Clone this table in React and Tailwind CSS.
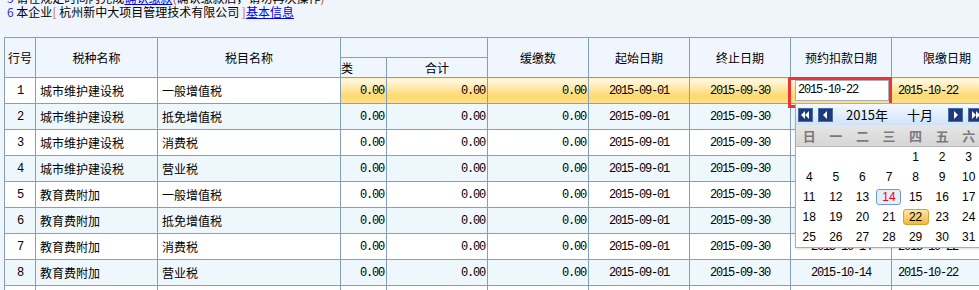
import React from 'react';

const CJK = { fontFamily: '"Noto Sans CJK SC", "Liberation Sans", sans-serif' };

const rows = [
  ['1', '城市维护建设税', '一般增值税', '2015-10-22', '2015-10-22'],
  ['2', '城市维护建设税', '抵免增值税', '2015-10-14', '2015-10-22'],
  ['3', '城市维护建设税', '消费税', '2015-10-14', '2015-10-22'],
  ['4', '城市维护建设税', '营业税', '2015-10-14', '2015-10-22'],
  ['5', '教育费附加', '一般增值税', '2015-10-14', '2015-10-22'],
  ['6', '教育费附加', '抵免增值税', '2015-10-14', '2015-10-22'],
  ['7', '教育费附加', '消费税', '2015-10-14', '2015-10-22'],
  ['8', '教育费附加', '营业税', '2015-10-14', '2015-10-22'],
  ['9', '地方教育附加', '一般增值税', '2015-10-14', '2015-10-22'],
];

const num = 'font-["Liberation_Mono",monospace] text-[12px] tracking-[-1.2px]';

function NavBtn({ dir, double }) {
  return (
    <div className="shrink-0 w-[15px] h-[14px] bg-[#1d3a7a] border border-[#4a6aa8] flex items-center justify-center">
      <svg width="11" height="8" viewBox="0 0 11 8">
        {dir === 'left' ? (
          double ? (
            <>
              <polygon points="1,4 5,0 5,8" fill="#fff" />
              <polygon points="5,4 9,0 9,8" fill="#fff" />
            </>
          ) : (
            <polygon points="3,4 7,0 7,8" fill="#fff" />
          )
        ) : double ? (
          <>
            <polygon points="10,4 6,0 6,8" fill="#fff" />
            <polygon points="6,4 2,0 2,8" fill="#fff" />
          </>
        ) : (
          <polygon points="8,4 4,0 4,8" fill="#fff" />
        )}
      </svg>
    </div>
  );
}

function Calendar() {
  const days = [null, null, null, null, 1, 2, 3];
  for (let d = 4; d <= 31; d++) days.push(d);
  return (
    <div className="absolute left-[795px] top-[103px] w-[188px] bg-white border border-[#9fb0c4] shadow-sm">
      <div className="h-[21px] flex items-center gap-[5px] px-[2px] bg-gradient-to-b from-[#f4f9ff] to-[#cfe3f9] text-[13px] text-black whitespace-nowrap" style={CJK}>
        <NavBtn dir="left" double />
        <NavBtn dir="left" />
        <span className="shrink-0 ml-[0px] w-[58px] text-center">2015年</span>
        <span className="shrink-0 w-[38px] text-center">十月</span>
        <span className="shrink-0 ml-[-1px]" />
        <NavBtn dir="right" />
        <NavBtn dir="right" double />
      </div>
      <div className="h-[22px] grid grid-cols-7 items-center bg-gradient-to-b from-[#e6e6e6] to-[#d6d6d6] border-b border-[#b8b8b8] text-[13px] font-bold text-[#7a7a7a]" style={CJK}>
        {['日', '一', '二', '三', '四', '五', '六'].map((w) => (
          <div key={w} className="text-center">{w}</div>
        ))}
      </div>
      <div className="grid grid-cols-7 font-['Liberation_Sans',sans-serif] text-[12px] text-black">
        {days.map((d, i) => (
          <div key={i} className="h-[20px] flex items-center justify-center">
            {d === 14 ? (
              <span className="w-[25px] h-[16px] rounded-[3px] border border-[#6d9bd8] bg-[#e4effc] text-[#ff0000] flex items-center justify-center">14</span>
            ) : d === 22 ? (
              <span className="w-[26px] h-[16px] rounded-[3px] border border-[#d9a22a] bg-gradient-to-b from-[#fde6a0] to-[#f0b93a] flex items-center justify-center">22</span>
            ) : (
              d
            )}
          </div>
        ))}
      </div>
    </div>
  );
}

export default function App() {
  const b = 'border border-[#859ebd]';
  const hl = 'bg-[linear-gradient(to_bottom,#fffbea,#ffeab0_35%,#ffd970_70%,#ffe391)]';
  return (
    <div className="relative w-[979px] h-[290px] overflow-hidden bg-[#f0f5fc] text-black" style={CJK}>
      <div className="pl-[7px] text-[12px] leading-[14px]">
        <div className="-mt-[9px] h-[14px] whitespace-nowrap">
          <span className="text-[#3333cc]">5</span> 请在规定时间内完成
          <span className="text-[#0000ee] underline">确认缴款</span>
          <span className="text-[#a0522d]">(</span>确认缴款后，请勿再次操作
          <span className="text-[#a0522d]">)</span>
        </div>
        <div className="h-[14px] whitespace-nowrap">
          <span className="text-[#3333cc]">6</span> 本企业<span className="text-[#d2691e]">[</span> 杭州新中大项目管理技术有限公司 <span className="text-[#d2691e]">]</span>
          <span className="text-[#0000ee] underline">基本信息 </span>
        </div>
      </div>

      <table className="mt-[18px] ml-[4px] border-collapse table-fixed text-[12px] bg-white" style={{ width: 988 }}>
        <colgroup>
          {[31, 122, 183, 46, 101, 101, 101, 101, 101, 101].map((w, i) => (
            <col key={i} style={{ width: w }} />
          ))}
        </colgroup>
        <thead className="bg-[#f0f6fd]">
          <tr className="h-[20px]">
            <th rowSpan={2} className={`${b} font-normal p-0`}>行号</th>
            <th rowSpan={2} className={`${b} font-normal p-0`}>税种名称</th>
            <th rowSpan={2} className={`${b} font-normal p-0`}>税目名称</th>
            <th colSpan={2} className={`${b} font-normal p-0`}></th>
            <th rowSpan={2} className={`${b} font-normal p-0`}>缓缴数</th>
            <th rowSpan={2} className={`${b} font-normal p-0`}>起始日期</th>
            <th rowSpan={2} className={`${b} font-normal p-0`}>终止日期</th>
            <th rowSpan={2} className={`${b} font-normal p-0`}>预约扣款日期</th>
            <th rowSpan={2} className={`${b} font-normal p-0 text-left pl-[31px]`}>限缴日期</th>
          </tr>
          <tr className="h-[20px]">
            <th className={`${b} font-normal p-0 text-left`}>类</th>
            <th className={`${b} font-normal p-0`}>合计</th>
          </tr>
        </thead>
        <tbody>
          {rows.map((r, i) => {
            const first = i === 0;
            const bg = i % 2 === 1 ? 'bg-[#eef7fc]' : 'bg-white';
            const cell = first ? hl : bg;
            return (
              <tr key={r[0]} className="h-[26px]">
                <td className={`${b} ${bg} p-0 text-center ${num}`}>{r[0]}</td>
                <td className={`${b} ${bg} p-0 pl-[4px] whitespace-nowrap`}>{r[1]}</td>
                <td className={`${b} ${bg} p-0 pl-[4px] whitespace-nowrap`}>{r[2]}</td>
                <td className={`${b} ${cell} p-0 pr-[2px] text-right ${num}`}>0.00</td>
                <td className={`${b} ${cell} p-0 pr-[2px] text-right ${num}`}>0.00</td>
                <td className={`${b} ${cell} p-0 pr-[2px] text-right ${num}`}>0.00</td>
                <td className={`${b} ${cell} p-0 text-center ${num}`}>2015-09-01</td>
                <td className={`${b} ${cell} p-0 text-center ${num}`}>2015-09-30</td>
                <td className={`${b} ${cell} p-0 text-center ${num}`}>
                  {first ? (
                    <div className="ml-[4px] w-[94px] h-[21px] bg-white border border-[#a7b1bd] text-left pl-[2px] leading-[19px]">{r[3]}</div>
                  ) : (
                    r[3]
                  )}
                </td>
                <td className={`${b} ${cell} p-0 text-left pl-[6px] ${num}`}>{r[4]}</td>
              </tr>
            );
          })}
        </tbody>
      </table>

      <div className="absolute left-[788px] top-[77px] w-[104px] h-[31px] border-[3px] border-[#ee3333]" />
      <Calendar />
    </div>
  );
}
